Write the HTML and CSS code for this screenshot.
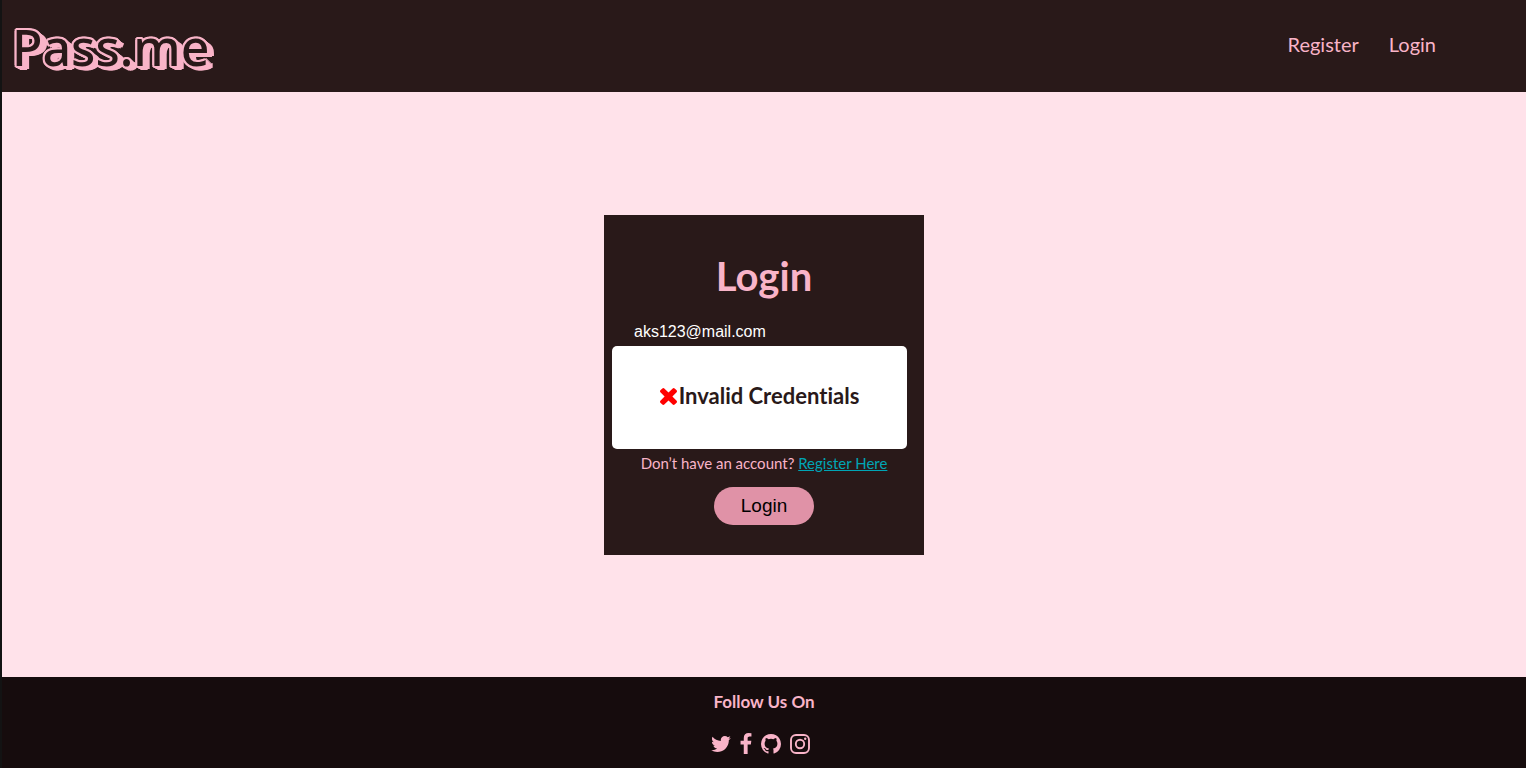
FILE: index.html
```html
<!DOCTYPE html>
<html lang="en">
<head>
<meta charset="utf-8">
<meta name="viewport" content="width=device-width, initial-scale=1">
<title>Pass.me</title>
<link rel="stylesheet" href="styles.css">
</head>
<body>
<header class="header">
  <a class="logo" href="#">Pass.me</a>
  <nav class="nav">
    <a class="nav-link" href="#">Register</a>
    <a class="nav-link" href="#">Login</a>
  </nav>
</header>
<main class="main">
  <form class="card">
    <h1 class="card-title">Login</h1>
    <input class="field" type="email" aria-label="Email" value="aks123@mail.com">
    <input class="field field-password" type="password" aria-label="Password">
    <p class="hint">Don’t have an account? <a class="hint-link" href="#">Register Here</a></p>
    <button class="submit" type="button">Login</button>
    <div class="alert" role="alert">
      <svg class="alert-icon" viewBox="302 366 1188 1188" aria-hidden="true"><path d="M1490 1322q0 40-28 68l-136 136q-28 28-68 28t-68-28l-294-294-294 294q-28 28-68 28t-68-28l-136-136q-28-28-28-68t28-68l294-294-294-294q-28-28-28-68t28-68l136-136q28-28 68-28t68 28l294 294 294-294q28-28 68-28t68 28l136 136q28 28 28 68t-28 68l-294 294 294 294q28 28 28 68z"/></svg>
      <span class="alert-text">Invalid Credentials</span>
    </div>
  </form>
</main>
<footer class="footer">
  <h2 class="footer-title">Follow Us On</h2>
  <div class="social">
    <a class="social-link" href="#" aria-label="Twitter"><svg width="20" height="16" viewBox="108 256 1576 1280"><path d="M1684 408q-67 98-162 167 1 14 1 42 0 130-38 259.500t-115.500 248.500-184.500 210.500-258 146-323 54.500q-271 0-496-145 35 4 78 4 225 0 401-138-105-2-188-64.500t-114-159.500q33 5 61 5 43 0 85-11-112-23-185.500-111.500t-73.500-205.500v-4q68 38 146 41-66-44-105-115t-39-154q0-88 44-163 121 149 294.500 238.500t371.500 99.500q-8-38-8-74 0-134 94.500-228.500t228.500-94.500q140 0 236 102 109-21 205-78-37 115-142 178 93-10 186-50z"/></svg></a>
    <a class="social-link" href="#" aria-label="Facebook"><svg width="12" height="21" viewBox="479 0 864 1664"><path d="M1343 12v264h-157q-86 0-116 36t-30 108v189h293l-39 296h-254v759h-306v-759h-255v-296h255v-218q0-186 104-288.500t277-102.500q147 0 228 12z"/></svg></a>
    <a class="social-link" href="#" aria-label="GitHub"><svg width="20" height="20" viewBox="128 128 1536 1536"><path d="M896 128q209 0 385.500 103t279.500 279.500 103 385.500q0 251-146.500 451.500t-378.500 277.500q-27 5-40-7t-13-30q0-3 .5-76.500t.5-134.500q0-97-52-142 57-6 102.500-18t94-39 81-66.500 53-105 20.500-150.500q0-119-79-206 37-91-8-204-28-9-81 11t-92 44l-38 24q-93-26-192-26t-192 26q-16-11-42.500-27t-83.500-38.500-85-13.500q-45 113-8 204-79 87-79 206 0 85 20.500 150t52.500 105 80.500 67 94 39 102.500 18q-39 36-49 103-21 10-45 15t-57 5-65.500-21.500-55.500-62.500q-19-32-48.500-52t-49.500-24l-20-3q-21 0-29 4.500t-5 11.500 9 14 13 12l7 5q22 10 43.500 38t31.500 51l10 23q13 38 44 61.500t67 30 69.500 7 55.500-3.500l23-4q0 38 .5 88.500t.5 54.500q0 18-13 30t-40 7q-232-77-378.500-277.500t-146.500-451.500q0-209 103-385.500t279.500-279.500 385.500-103z"/></svg></a>
    <a class="social-link" href="#" aria-label="Instagram"><svg width="20" height="20" viewBox="0 0 20 20"><rect x="1" y="1" width="18" height="18" rx="5" fill="none" stroke="currentColor" stroke-width="1.900"/><circle cx="10" cy="10" r="4.200" fill="none" stroke="currentColor" stroke-width="1.900"/><circle cx="15.200" cy="4.800" r="1.200"/></svg></a>
  </div>
</footer>
</body>
</html>
```
FILE: styles.css
```css
* {
  box-sizing: border-box;
}

body {
  display: flex;
  flex-direction: column;
  min-height: 100vh;
  margin: 0;
  border-left: 2px solid #131313;
  background: #ffe2ea;
  color: #f9b4c8;
  font-family: Lato, "Open Sans", sans-serif;
}

.header {
  display: flex;
  align-items: center;
  justify-content: space-between;
  height: 92px;
  padding: 0 90px 0 10px;
  background: #291919;
}

.logo {
  padding-top: 2px;
  color: #291919;
  font: 500 50px/60px "Noto Sans", sans-serif;
  text-decoration: none;
  text-shadow:
    -2px -1px #f9b4c8, -1px -2px #f9b4c8, -2px 1px #f9b4c8, 1px -2px #f9b4c8,
    2px -1px #f9b4c8, 3px 0 #f9b4c8, 4px 1px #f9b4c8, 5px 2px #f9b4c8,
    6px 3px #f9b4c8, 5px 4px #f9b4c8, 3px 4px #f9b4c8, 1px 3px #f9b4c8,
    -1px 2px #f9b4c8, 7px 3px #f9b4c8;
}

.nav {
  display: flex;
  gap: 30px;
  padding-bottom: 4px;
}

.nav-link {
  color: inherit;
  font-size: 20px;
  line-height: 24px;
  text-decoration: none;
}

.main {
  display: flex;
  flex: 1;
  align-items: center;
  justify-content: center;
}

.card {
  position: relative;
  display: flex;
  flex-direction: column;
  align-items: center;
  width: 320px;
  padding: 30px;
  background: #291919;
}

.card-title {
  margin: 0 0 12px;
  font-size: 40px;
  line-height: 62px;
}

.field {
  width: 100%;
  height: 26px;
  padding: 0;
  border: 0;
  background: transparent;
  color: #fff;
  font: 16px "Liberation Sans", Arial, sans-serif;
}

.field-password {
  margin: 40px 0;
}

.hint {
  margin: 0 0 12px;
  font-size: 15px;
  line-height: 24px;
  white-space: nowrap;
}

.hint-link {
  color: #00a5b5;
}

.submit {
  width: 100px;
  height: 38px;
  border: 0;
  border-radius: 20px;
  background: #e092a7;
  color: #000;
  font: 19px "Liberation Sans", Arial, sans-serif;
}

.alert {
  position: absolute;
  top: 131px;
  left: 8px;
  display: flex;
  align-items: center;
  justify-content: center;
  width: 295px;
  height: 103px;
  padding-bottom: 2px;
  border-radius: 5px;
  background: #fff;
  color: #291919;
}

.alert-icon {
  width: 17px;
  height: 17px;
  margin-right: 2px;
  fill: #f00;
}

.alert-text {
  font-size: 22px;
  font-weight: bold;
  line-height: 28px;
  font-variant-ligatures: none;
}

.footer {
  display: flex;
  flex-direction: column;
  align-items: center;
  padding: 13px 0;
  background: #160c0d;
}

.footer-title {
  margin: 0 0 18px;
  font-size: 17px;
  line-height: 24px;
}

.social {
  display: flex;
  gap: 9px;
  align-items: center;
  height: 23px;
  padding-right: 8px;
}

.social-link {
  display: flex;
  color: inherit;
  fill: currentColor;
}
```
